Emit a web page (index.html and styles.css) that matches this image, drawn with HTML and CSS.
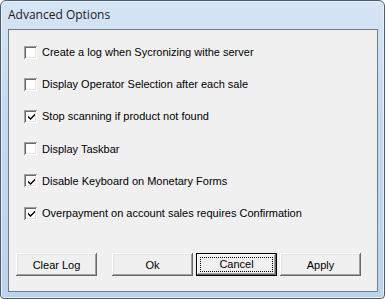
FILE: index.html
```html
<!DOCTYPE html>
<html lang="en">
<head>
    <meta charset="UTF-8">
    <title>Advanced Options</title>
    <link rel="stylesheet" href="styles.css">
</head>
<body>
    <div class="window">
        <div class="titlebar">Advanced Options</div>
        <div class="client">
            <div class="options">
                <label class="option"><span class="box"></span>Create a log when Sycronizing withe server</label>
                <label class="option"><span class="box"></span>Display Operator Selection after each sale</label>
                <label class="option"><span class="box checked"><svg width="9" height="9" viewBox="0 0 9 9"><path d="M1 3.5 L3.5 6 L8 1.5 L8 3.5 L3.5 8 L1 5.5 Z" fill="#000"/></svg></span>Stop scanning if product not found</label>
                <label class="option"><span class="box"></span>Display Taskbar</label>
                <label class="option"><span class="box checked"><svg width="9" height="9" viewBox="0 0 9 9"><path d="M1 3.5 L3.5 6 L8 1.5 L8 3.5 L3.5 8 L1 5.5 Z" fill="#000"/></svg></span>Disable Keyboard on Monetary Forms</label>
                <label class="option"><span class="box checked"><svg width="9" height="9" viewBox="0 0 9 9"><path d="M1 3.5 L3.5 6 L8 1.5 L8 3.5 L3.5 8 L1 5.5 Z" fill="#000"/></svg></span>Overpayment on account sales requires Confirmation</label>
            </div>
            <div class="buttons">
                <button class="btn clear">Clear Log</button>
                <button class="btn ok">Ok</button>
                <button class="btn default"><span class="focus">Cancel</span></button>
                <button class="btn">Apply</button>
            </div>
        </div>
    </div>
</body>
</html>
```

FILE: styles.css
```css
body {
    margin: 0;
    padding: 0;
    background: #ffffff;
}
.window {
    width: 385px;
    height: 299px;
    box-sizing: border-box;
    border: 1px solid #4c5d70;
    border-radius: 6px 6px 4px 4px;
    background: linear-gradient(to bottom, #d6e5f4 0%, #c5d9ee 40%, #bcd3eb 100%);
    box-shadow: inset 0 0 0 1px #e8f0f9;
    display: flex;
    flex-direction: column;
    padding: 0 6px 6px 7px;
}
.titlebar {
    height: 28px;
    line-height: 28px;
    font-family: "Open Sans", "Liberation Sans", sans-serif;
    font-size: 12px;
    color: #1b1b1b;
}
.client {
    flex: 1;
    background: #f0f0f0;
    border: 1px solid #6e7b89;
    display: flex;
    flex-direction: column;
    font-family: "Liberation Sans", Arial, sans-serif;
    font-size: 11px;
    color: #000;
}
.options {
    padding: 6px 0 0 15px;
}
.option {
    display: flex;
    align-items: center;
    height: 32.2px;
}
.box {
    width: 13px;
    height: 13px;
    box-sizing: border-box;
    margin-right: 5px;
    background: #fff;
    box-shadow: inset 1px 1px #a0a0a0, inset -1px -1px #ffffff, inset 2px 2px #696969, inset -2px -2px #e3e3e3;
    display: flex;
    align-items: center;
    justify-content: center;
}
.box svg {
    display: block;
    margin: 1px 0 0 1px;
}
.buttons {
    display: flex;
    margin-top: auto;
    padding: 0 0 15px 7px;
}
.btn {
    width: 81px;
    height: 23px;
    margin-left: 3px;
    padding: 0;
    border: none;
    background: #f0f0f0;
    font-family: "Liberation Sans", Arial, sans-serif;
    font-size: 11px;
    color: #000;
    box-shadow: inset -1px -1px #696969, inset 1px 1px #ffffff, inset -2px -2px #a0a0a0, inset 2px 2px #e3e3e3;
}
.btn.clear {
    margin-left: 0;
}
.btn.ok {
    margin-left: 15px;
}
.btn.default {
    box-shadow: inset 0 0 0 1px #000, inset -2px -2px #696969, inset 2px 2px #ffffff, inset -3px -3px #a0a0a0;
    padding: 4px;
}
.focus {
    display: block;
    height: 100%;
    box-sizing: border-box;
    border: 1px dotted #000;
    line-height: 13px;
}
```
